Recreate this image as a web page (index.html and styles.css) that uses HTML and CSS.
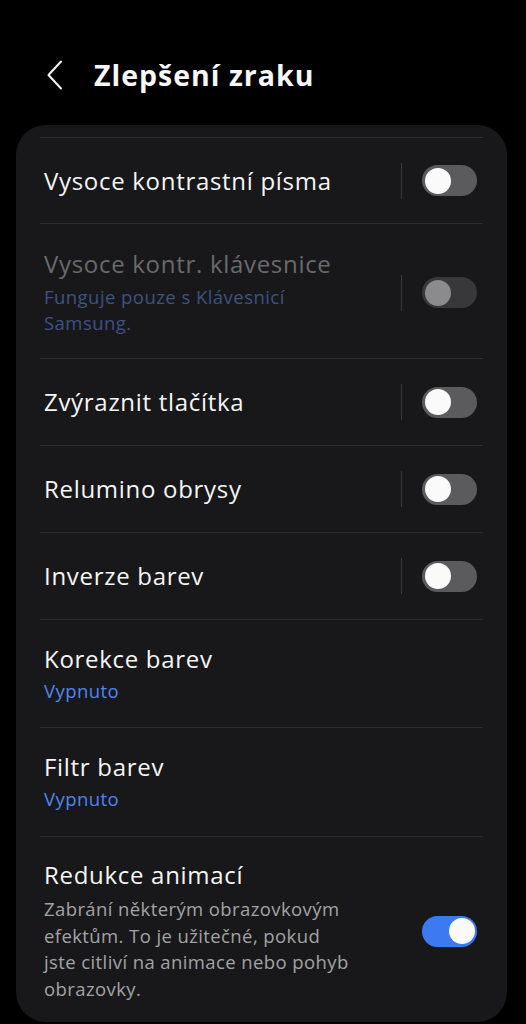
FILE: index.html
```html
<!DOCTYPE html>
<html lang="cs">
<head>
<meta charset="utf-8">
<title>Zlepšení zraku</title>
<link rel="stylesheet" href="styles.css">
</head>
<body>
<header class="appbar">
  <button class="back" aria-label="Zpět">
    <svg width="18" height="30" viewBox="0 0 18 30"><path d="M15 1.5 L2.5 15 L15 28.5" fill="none" stroke="#f2f2f2" stroke-width="2" stroke-linecap="round" stroke-linejoin="round"/></svg>
  </button>
  <h1 class="title">Zlepšení zraku</h1>
</header>
<main class="card">
  <div class="row row-first">
    <div class="text"><div class="label">Vysoce kontrastní písma</div></div>
    <div class="ctrl"><span class="vline"></span><span class="switch"></span></div>
  </div>
  <div class="row row-2">
    <div class="text">
      <div class="label disabled">Vysoce kontr. klávesnice</div>
      <div class="sub sub-dim">Funguje pouze s Klávesnicí<br>Samsung.</div>
    </div>
    <div class="ctrl"><span class="vline"></span><span class="switch switch-disabled"></span></div>
  </div>
  <div class="row">
    <div class="text"><div class="label">Zvýraznit tlačítka</div></div>
    <div class="ctrl"><span class="vline"></span><span class="switch"></span></div>
  </div>
  <div class="row">
    <div class="text"><div class="label">Relumino obrysy</div></div>
    <div class="ctrl"><span class="vline"></span><span class="switch"></span></div>
  </div>
  <div class="row">
    <div class="text"><div class="label">Inverze barev</div></div>
    <div class="ctrl"><span class="vline"></span><span class="switch"></span></div>
  </div>
  <div class="row row-value">
    <div class="text">
      <div class="label">Korekce barev</div>
      <div class="sub sub-blue">Vypnuto</div>
    </div>
  </div>
  <div class="row row-value row-value-2">
    <div class="text">
      <div class="label">Filtr barev</div>
      <div class="sub sub-blue">Vypnuto</div>
    </div>
  </div>
  <div class="row row-last">
    <div class="text">
      <div class="label">Redukce animací</div>
      <div class="desc">Zabrání některým obrazovkovým<br>efektům. To je užitečné, pokud<br>jste citliví na animace nebo pohyb<br>obrazovky.</div>
    </div>
    <div class="ctrl"><span class="switch switch-on"></span></div>
  </div>
</main>
</body>
</html>
```
FILE: styles.css
```css
* { box-sizing: border-box; }
html, body { margin: 0; padding: 0; background: #000; }
body {
  font-family: "Open Sans", Roboto, "Liberation Sans", sans-serif;
  color: #f5f5f5;
  width: 526px;
  height: 1024px;
  overflow: hidden;
}
.appbar {
  height: 125px;
  display: flex;
  align-items: center;
  padding: 25px 0 0 44px;
  gap: 30px;
}
.back {
  background: none;
  border: 0;
  padding: 0;
  margin: 0 0 0 2px;
  width: 18px;
  height: 30px;
  display: block;
}
.back svg { display: block; }
.title {
  margin: 0;
  font-size: 28.5px;
  font-weight: 700;
  letter-spacing: 1px;
  color: #f7f7f7;
  line-height: 36px;
}
.card {
  margin: 0 19px 0 16px;
  background: #18181a;
  border-radius: 30px;
  padding: 12px 24px 0 24px;
  height: 897px;
}
.row {
  display: flex;
  align-items: center;
  border-top: 1px solid #2d2d2f;
  padding: 0 6px 0 4px;
  min-height: 87px;
}
.row-first { min-height: 86px; }
.row-2 { padding-top: 25px; padding-bottom: 22px; }
.row-value { padding-top: 24px; padding-bottom: 23px; }
.row-value-2 { padding-bottom: 24px; }
.row-last { padding-top: 23px; padding-bottom: 20px; }
.text { flex: 1; min-width: 0; }
.label {
  font-size: 24px;
  line-height: 30px;
  letter-spacing: 0.7px;
  color: #f5f5f5;
  white-space: nowrap;
}
.label.disabled { color: #6a6a6c; }
.sub {
  font-size: 18.5px;
  line-height: 26px;
  letter-spacing: 0.45px;
  white-space: nowrap;
}
.sub-dim { color: #3e5283; margin-top: 5px; }
.sub-blue { color: #4f86ec; margin-top: 4px; }
.desc {
  font-size: 18.5px;
  line-height: 26.5px;
  letter-spacing: 0.4px;
  color: #a3a3a5;
  margin-top: 6px;
  white-space: nowrap;
}
.ctrl {
  display: flex;
  align-items: center;
  gap: 20px;
}
.vline {
  width: 1.5px;
  height: 36px;
  background: #3a3a3c;
}
.switch {
  position: relative;
  width: 55px;
  height: 31px;
  border-radius: 16px;
  background: #5b5b5d;
  display: block;
}
.switch::after {
  content: "";
  position: absolute;
  left: 2.5px;
  top: 2.5px;
  width: 26px;
  height: 26px;
  border-radius: 50%;
  background: #fafafa;
}
.switch-disabled { background: #38383a; }
.switch-disabled::after { background: #8b8b8d; }
.switch-on { background: #3b7af0; }
.switch-on::after { left: auto; right: 2.5px; }
```
